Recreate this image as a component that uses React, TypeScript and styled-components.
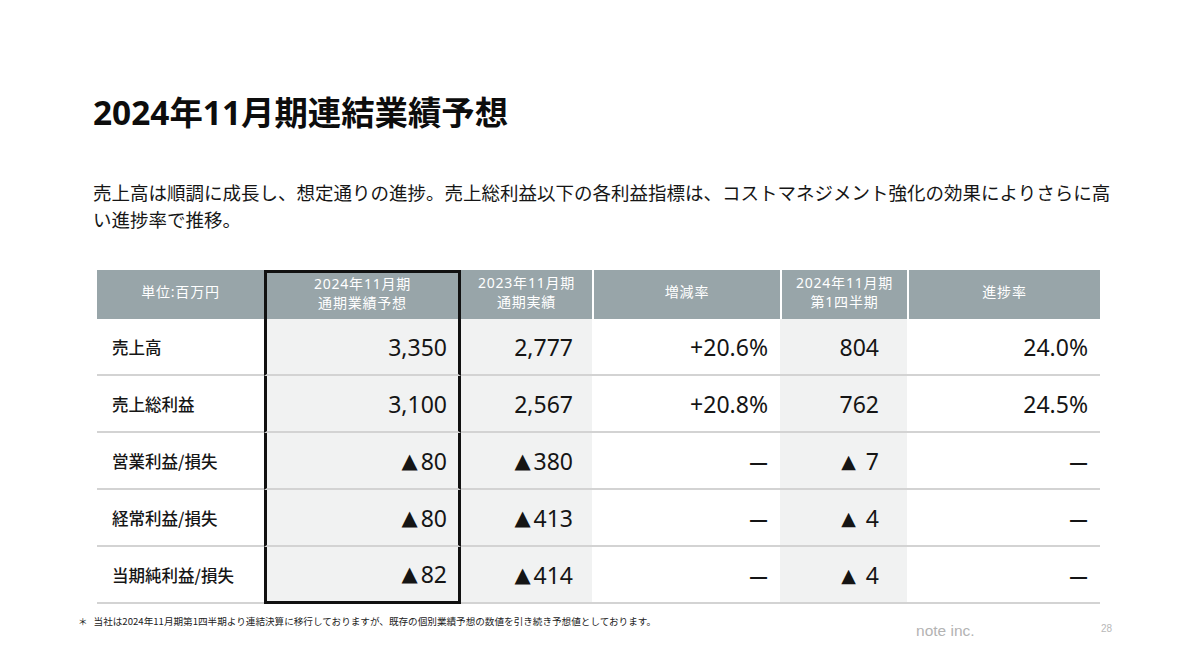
import React from 'react';
import styled, { createGlobalStyle } from 'styled-components';

const GlobalStyle = createGlobalStyle`
  html, body {
    margin: 0;
    padding: 0;
    background: #ffffff;
  }
  body {
    font-family: "Noto Sans", "Noto Sans CJK JP", sans-serif;
    color: #111111;
  }
`;

const JP = `"Noto Sans", "Noto Sans CJK JP", sans-serif`;

const Page = styled.div`
  width: 1200px;
  height: 670px;
  box-sizing: border-box;
  padding: 92px 0 0 93px;
  overflow: hidden;
  display: flex;
  flex-direction: column;
`;

const Title = styled.h1`
  margin: 0;
  font-family: ${JP};
  font-size: 33.4px;
  line-height: 40px;
  font-weight: 700;
  color: #0d0d0d;
`;

const Lead = styled.p`
  margin: 47px 0 0;
  font-family: "Noto Sans CJK JP", sans-serif;
  font-size: 18.5px;
  line-height: 27px;
  color: #161616;
`;

const Grid = styled.div`
  margin: 37px 0 0 4px;
  display: grid;
  grid-template-columns: 167px 197px 131px 188px 127px 193px;
  grid-auto-rows: 57px;
  grid-template-rows: 49px;
`;

const HeadCell = styled.div<{ $framed?: boolean; $sep?: boolean }>`
  box-sizing: border-box;
  background: #98a5a9;
  color: #ffffff;
  font-family: ${JP};
  font-size: 14px;
  letter-spacing: 0.8px;
  line-height: 19px;
  display: flex;
  flex-direction: column;
  align-items: center;
  justify-content: center;
  text-align: center;
  padding-bottom: 6px;
  border-left: ${p => (p.$framed ? '3px solid #111' : p.$sep ? '2px solid #ffffff' : 'none')};
  border-right: ${p => (p.$framed ? '3px solid #111' : 'none')};
  border-top: ${p => (p.$framed ? '3px solid #111' : 'none')};
`;

const Label = styled.div`
  box-sizing: border-box;
  display: flex;
  align-items: center;
  padding: 0 0 0 15px;
  font-family: "Noto Sans CJK JP", sans-serif;
  font-size: 16.5px;
  font-weight: 500;
  color: #161616;
  border-bottom: 2px solid #d3d3d3;
`;

const Value = styled.div<{ $shade?: boolean; $framed?: boolean; $last?: boolean; $pr: number }>`
  box-sizing: border-box;
  display: flex;
  align-items: center;
  justify-content: flex-end;
  padding-right: ${p => p.$pr}px;
  background: ${p => (p.$shade ? '#f1f2f2' : '#ffffff')};
  font-family: ${JP};
  font-size: 23px;
  color: #151515;
  border-bottom: ${p => (p.$framed && p.$last ? '3px solid #111' : '2px solid #d3d3d3')};
  border-left: ${p => (p.$framed ? '3px solid #111' : 'none')};
  border-right: ${p => (p.$framed ? '3px solid #111' : 'none')};
`;

const Tri = styled.span<{ $gap?: boolean }>`
  font-family: "DejaVu Sans", sans-serif;
  font-size: ${p => (p.$gap ? '19px' : '21px')};
  margin-right: ${p => (p.$gap ? '10px' : '3px')};
`;

const Dash = styled.span`
  font-family: "Noto Sans CJK JP", sans-serif;
  font-size: 21px;
  font-weight: 700;
`;

const Footer = styled.div`
  margin: 10px 0 0 -15px;
  display: flex;
  align-items: flex-start;
`;

const Note = styled.div`
  font-family: "Noto Sans CJK JP", sans-serif;
  font-size: 9.6px;
  line-height: 14px;
  color: #222;
  display: flex;
  gap: 6px;
`;

const Brand = styled.div`
  margin: 8px 0 0 260px;
  font-family: "Liberation Sans", Arial, sans-serif;
  font-size: 15.5px;
  color: #b3b3b3;
`;

const PageNo = styled.div`
  margin: 9px 0 0 auto;
  padding-right: 88px;
  font-family: "Liberation Sans", Arial, sans-serif;
  font-size: 10px;
  color: #b8b8b8;
`;

type Num = { tri?: boolean; gap?: boolean; dash?: boolean; v: string };

const rows: { label: string; cells: Num[] }[] = [
  { label: '売上高', cells: [{ v: '3,350' }, { v: '2,777' }, { v: '+20.6%' }, { v: '804' }, { v: '24.0%' }] },
  { label: '売上総利益', cells: [{ v: '3,100' }, { v: '2,567' }, { v: '+20.8%' }, { v: '762' }, { v: '24.5%' }] },
  {
    label: '営業利益/損失',
    cells: [{ tri: true, v: '80' }, { tri: true, v: '380' }, { dash: true, v: '' }, { tri: true, gap: true, v: '7' }, { dash: true, v: '' }],
  },
  {
    label: '経常利益/損失',
    cells: [{ tri: true, v: '80' }, { tri: true, v: '413' }, { dash: true, v: '' }, { tri: true, gap: true, v: '4' }, { dash: true, v: '' }],
  },
  {
    label: '当期純利益/損失',
    cells: [{ tri: true, v: '82' }, { tri: true, v: '414' }, { dash: true, v: '' }, { tri: true, gap: true, v: '4' }, { dash: true, v: '' }],
  },
];

// column settings for the five value columns
const cols = [
  { shade: true, framed: true, pr: 11 },
  { shade: true, pr: 19 },
  { pr: 12 },
  { shade: true, pr: 28 },
  { pr: 12 },
];

export default function App() {
  return (
    <>
      <GlobalStyle />
      <Page>
        <Title>2024年11月期連結業績予想</Title>
        <Lead>
          売上高は順調に成長し、想定通りの進捗。売上総利益以下の各利益指標は、コストマネジメント強化の効果によりさらに高
          <br />
          い進捗率で推移。
        </Lead>
        <Grid>
          <HeadCell>単位:百万円</HeadCell>
          <HeadCell $framed>
            <span>2024年11月期</span>
            <span>通期業績予想</span>
          </HeadCell>
          <HeadCell>
            <span>2023年11月期</span>
            <span>通期実績</span>
          </HeadCell>
          <HeadCell $sep>増減率</HeadCell>
          <HeadCell $sep>
            <span>2024年11月期</span>
            <span>第1四半期</span>
          </HeadCell>
          <HeadCell $sep>進捗率</HeadCell>
          {rows.map((r, ri) => (
            <React.Fragment key={r.label}>
              <Label>{r.label}</Label>
              {r.cells.map((c, ci) => (
                <Value
                  key={ci}
                  $shade={cols[ci].shade}
                  $framed={cols[ci].framed}
                  $last={ri === rows.length - 1}
                  $pr={cols[ci].pr}
                >
                  {c.tri && <Tri $gap={c.gap}>▲</Tri>}
                  {c.dash ? <Dash>—</Dash> : c.v}
                </Value>
              ))}
            </React.Fragment>
          ))}
        </Grid>
        <Footer>
          <Note>
            <span>＊</span>
            <span>当社は2024年11月期第1四半期より連結決算に移行しておりますが、既存の個別業績予想の数値を引き続き予想値としております。</span>
          </Note>
          <Brand>note inc.</Brand>
          <PageNo>28</PageNo>
        </Footer>
      </Page>
    </>
  );
}
